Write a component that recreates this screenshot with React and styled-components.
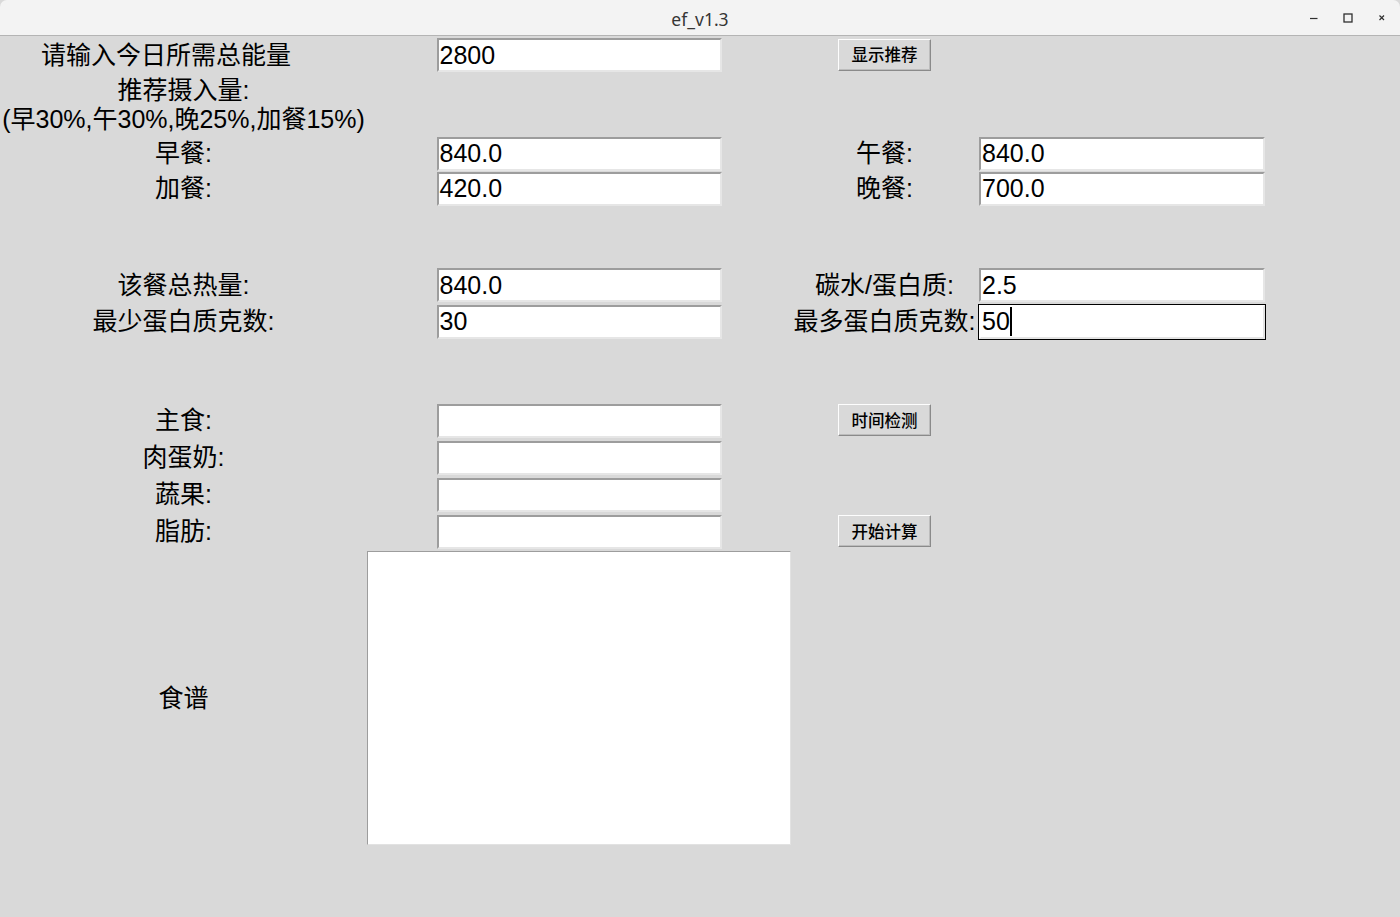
import React from "react";
import styled, { createGlobalStyle } from "styled-components";

const Global = createGlobalStyle`
	html, body {
		margin: 0;
		padding: 0;
		background: #d9d9d9;
	}
	body {
		width: 1400px;
		height: 917px;
		overflow: hidden;
	}
`;

const Window = styled.div`
	width: 1400px;
	height: 917px;
	background: #d9d9d9;
	display: flex;
	flex-direction: column;
`;

const TitleBar = styled.header`
	height: 35px;
	flex: 0 0 35px;
	display: grid;
	grid-template-columns: 1fr auto 1fr;
	align-items: center;
	background: #f3f3f3;
	border-bottom: 1px solid #b4b4b4;
	border-radius: 7px 7px 0 0;
`;

const Title = styled.span`
	grid-column: 2;
	font-family: "Noto Sans", "DejaVu Sans", sans-serif;
	font-size: 17.5px;
	color: #353535;
	padding-top: 3px;
`;

const Controls = styled.div`
	grid-column: 3;
	justify-self: end;
	display: flex;
	padding-right: 1px;
	padding-top: 1px;
`;

const Control = styled.div`
	width: 34px;
	height: 34px;
	display: flex;
	align-items: center;
	justify-content: center;
	color: #2f2f2f;
`;

const Grid = styled.main`
	display: grid;
	grid-template-columns: 367px 424px 187px 288px;
	grid-template-rows: 36px 63px 35px 35px 61px 36px 37px 62px 37px 37px 37px 37px 296px;
	padding-top: 1px;
	align-items: center;
	justify-items: center;
`;

const Cell = styled.div`
	grid-row: ${(p) => p.$r};
	grid-column: ${(p) => p.$c};
	display: flex;
	align-items: center;
	justify-content: center;
`;

const Label = styled.div`
	font-family: "Liberation Sans", "Noto Sans CJK SC", sans-serif;
	font-size: 25px;
	line-height: 29px;
	color: #000;
	text-align: center;
	white-space: pre;
	padding-right: ${(p) => p.$shift || 0}px;
`;

const Field = styled.div`
	box-sizing: border-box;
	width: ${(p) => p.$w || 285}px;
	height: 34px;
	background: #fff;
	border: 2px solid;
	border-color: ${(p) =>
		p.$focused ? "#fff #e4e4e4 #e4e4e4 #fff" : "#9d9d9d #e6e6e6 #e6e6e6 #9d9d9d"};
	outline: 1px solid ${(p) => (p.$focused ? "#000" : "transparent")};
	padding-left: 1px;
	display: flex;
	align-items: center;
	font-family: "Liberation Sans", "Noto Sans CJK SC", sans-serif;
	font-size: 25px;
	color: #000;
`;

const Caret = styled.span`
	display: inline-block;
	width: 2px;
	height: 29px;
	background: #000;
`;

const Button = styled.button`
	box-sizing: border-box;
	width: 93px;
	height: 32px;
	margin-top: -1px;
	background: #d9d9d9;
	border: 1px solid;
	border-color: #fdfdfd #8a8a8a #8a8a8a #fdfdfd;
	box-shadow: inset -1px -1px 0 #bcbcbc;
	padding: 0 0 1px;
	font-family: "Noto Sans CJK SC", "Noto Sans", sans-serif;
	font-size: 16.5px;
	font-weight: 500;
	color: #000;
	cursor: pointer;
`;

const TextBox = styled.div`
	box-sizing: border-box;
	width: 424px;
	height: 294px;
	background: #fff;
	border: 1px solid;
	border-color: #9d9d9d #e2e2e2 #e2e2e2 #9d9d9d;
`;

const App = () => {
	return (
		<Window>
			<Global />
			<TitleBar>
				<Title>ef_v1.3</Title>
				<Controls>
					<Control>
						<svg width="10" height="10" viewBox="0 0 10 10">
							<line x1="1" y1="5.5" x2="8.5" y2="5.5" stroke="currentColor" strokeWidth="1.2" />
						</svg>
					</Control>
					<Control>
						<svg width="10" height="10" viewBox="0 0 10 10">
							<rect x="1" y="1" width="8" height="8" fill="none" stroke="currentColor" strokeWidth="1.3" />
						</svg>
					</Control>
					<Control>
						<svg width="10" height="10" viewBox="0 0 10 10">
							<path d="M2.5 2.5 L7 7 M7 2.5 L2.5 7" stroke="currentColor" strokeWidth="1.2" />
						</svg>
					</Control>
				</Controls>
			</TitleBar>

			<Grid>
				<Cell $r={1} $c={1}>
					<Label $shift={35}>请输入今日所需总能量</Label>
				</Cell>
				<Cell $r={1} $c={2}>
					<Field>2800</Field>
				</Cell>
				<Cell $r={1} $c={3}>
					<Button>显示推荐</Button>
				</Cell>

				<Cell $r={2} $c={1}>
					<Label>{"推荐摄入量:\n(早30%,午30%,晚25%,加餐15%)"}</Label>
				</Cell>

				<Cell $r={3} $c={1}>
					<Label>早餐:</Label>
				</Cell>
				<Cell $r={3} $c={2}>
					<Field>840.0</Field>
				</Cell>
				<Cell $r={3} $c={3}>
					<Label>午餐:</Label>
				</Cell>
				<Cell $r={3} $c={4}>
					<Field $w={286}>840.0</Field>
				</Cell>

				<Cell $r={4} $c={1}>
					<Label>加餐:</Label>
				</Cell>
				<Cell $r={4} $c={2}>
					<Field>420.0</Field>
				</Cell>
				<Cell $r={4} $c={3}>
					<Label>晚餐:</Label>
				</Cell>
				<Cell $r={4} $c={4}>
					<Field $w={286}>700.0</Field>
				</Cell>

				<Cell $r={6} $c={1}>
					<Label>该餐总热量:</Label>
				</Cell>
				<Cell $r={6} $c={2}>
					<Field>840.0</Field>
				</Cell>
				<Cell $r={6} $c={3}>
					<Label>碳水/蛋白质:</Label>
				</Cell>
				<Cell $r={6} $c={4}>
					<Field $w={286}>2.5</Field>
				</Cell>

				<Cell $r={7} $c={1}>
					<Label>最少蛋白质克数:</Label>
				</Cell>
				<Cell $r={7} $c={2}>
					<Field>30</Field>
				</Cell>
				<Cell $r={7} $c={3}>
					<Label>最多蛋白质克数:</Label>
				</Cell>
				<Cell $r={7} $c={4}>
					<Field $w={286} $focused>
						50
						<Caret />
					</Field>
				</Cell>

				<Cell $r={9} $c={1}>
					<Label>主食:</Label>
				</Cell>
				<Cell $r={9} $c={2}>
					<Field />
				</Cell>
				<Cell $r={9} $c={3}>
					<Button>时间检测</Button>
				</Cell>

				<Cell $r={10} $c={1}>
					<Label>肉蛋奶:</Label>
				</Cell>
				<Cell $r={10} $c={2}>
					<Field />
				</Cell>

				<Cell $r={11} $c={1}>
					<Label>蔬果:</Label>
				</Cell>
				<Cell $r={11} $c={2}>
					<Field />
				</Cell>

				<Cell $r={12} $c={1}>
					<Label>脂肪:</Label>
				</Cell>
				<Cell $r={12} $c={2}>
					<Field />
				</Cell>
				<Cell $r={12} $c={3}>
					<Button>开始计算</Button>
				</Cell>

				<Cell $r={13} $c={1}>
					<Label>食谱</Label>
				</Cell>
				<Cell $r={13} $c={2}>
					<TextBox />
				</Cell>
			</Grid>
		</Window>
	);
};

export default App;
